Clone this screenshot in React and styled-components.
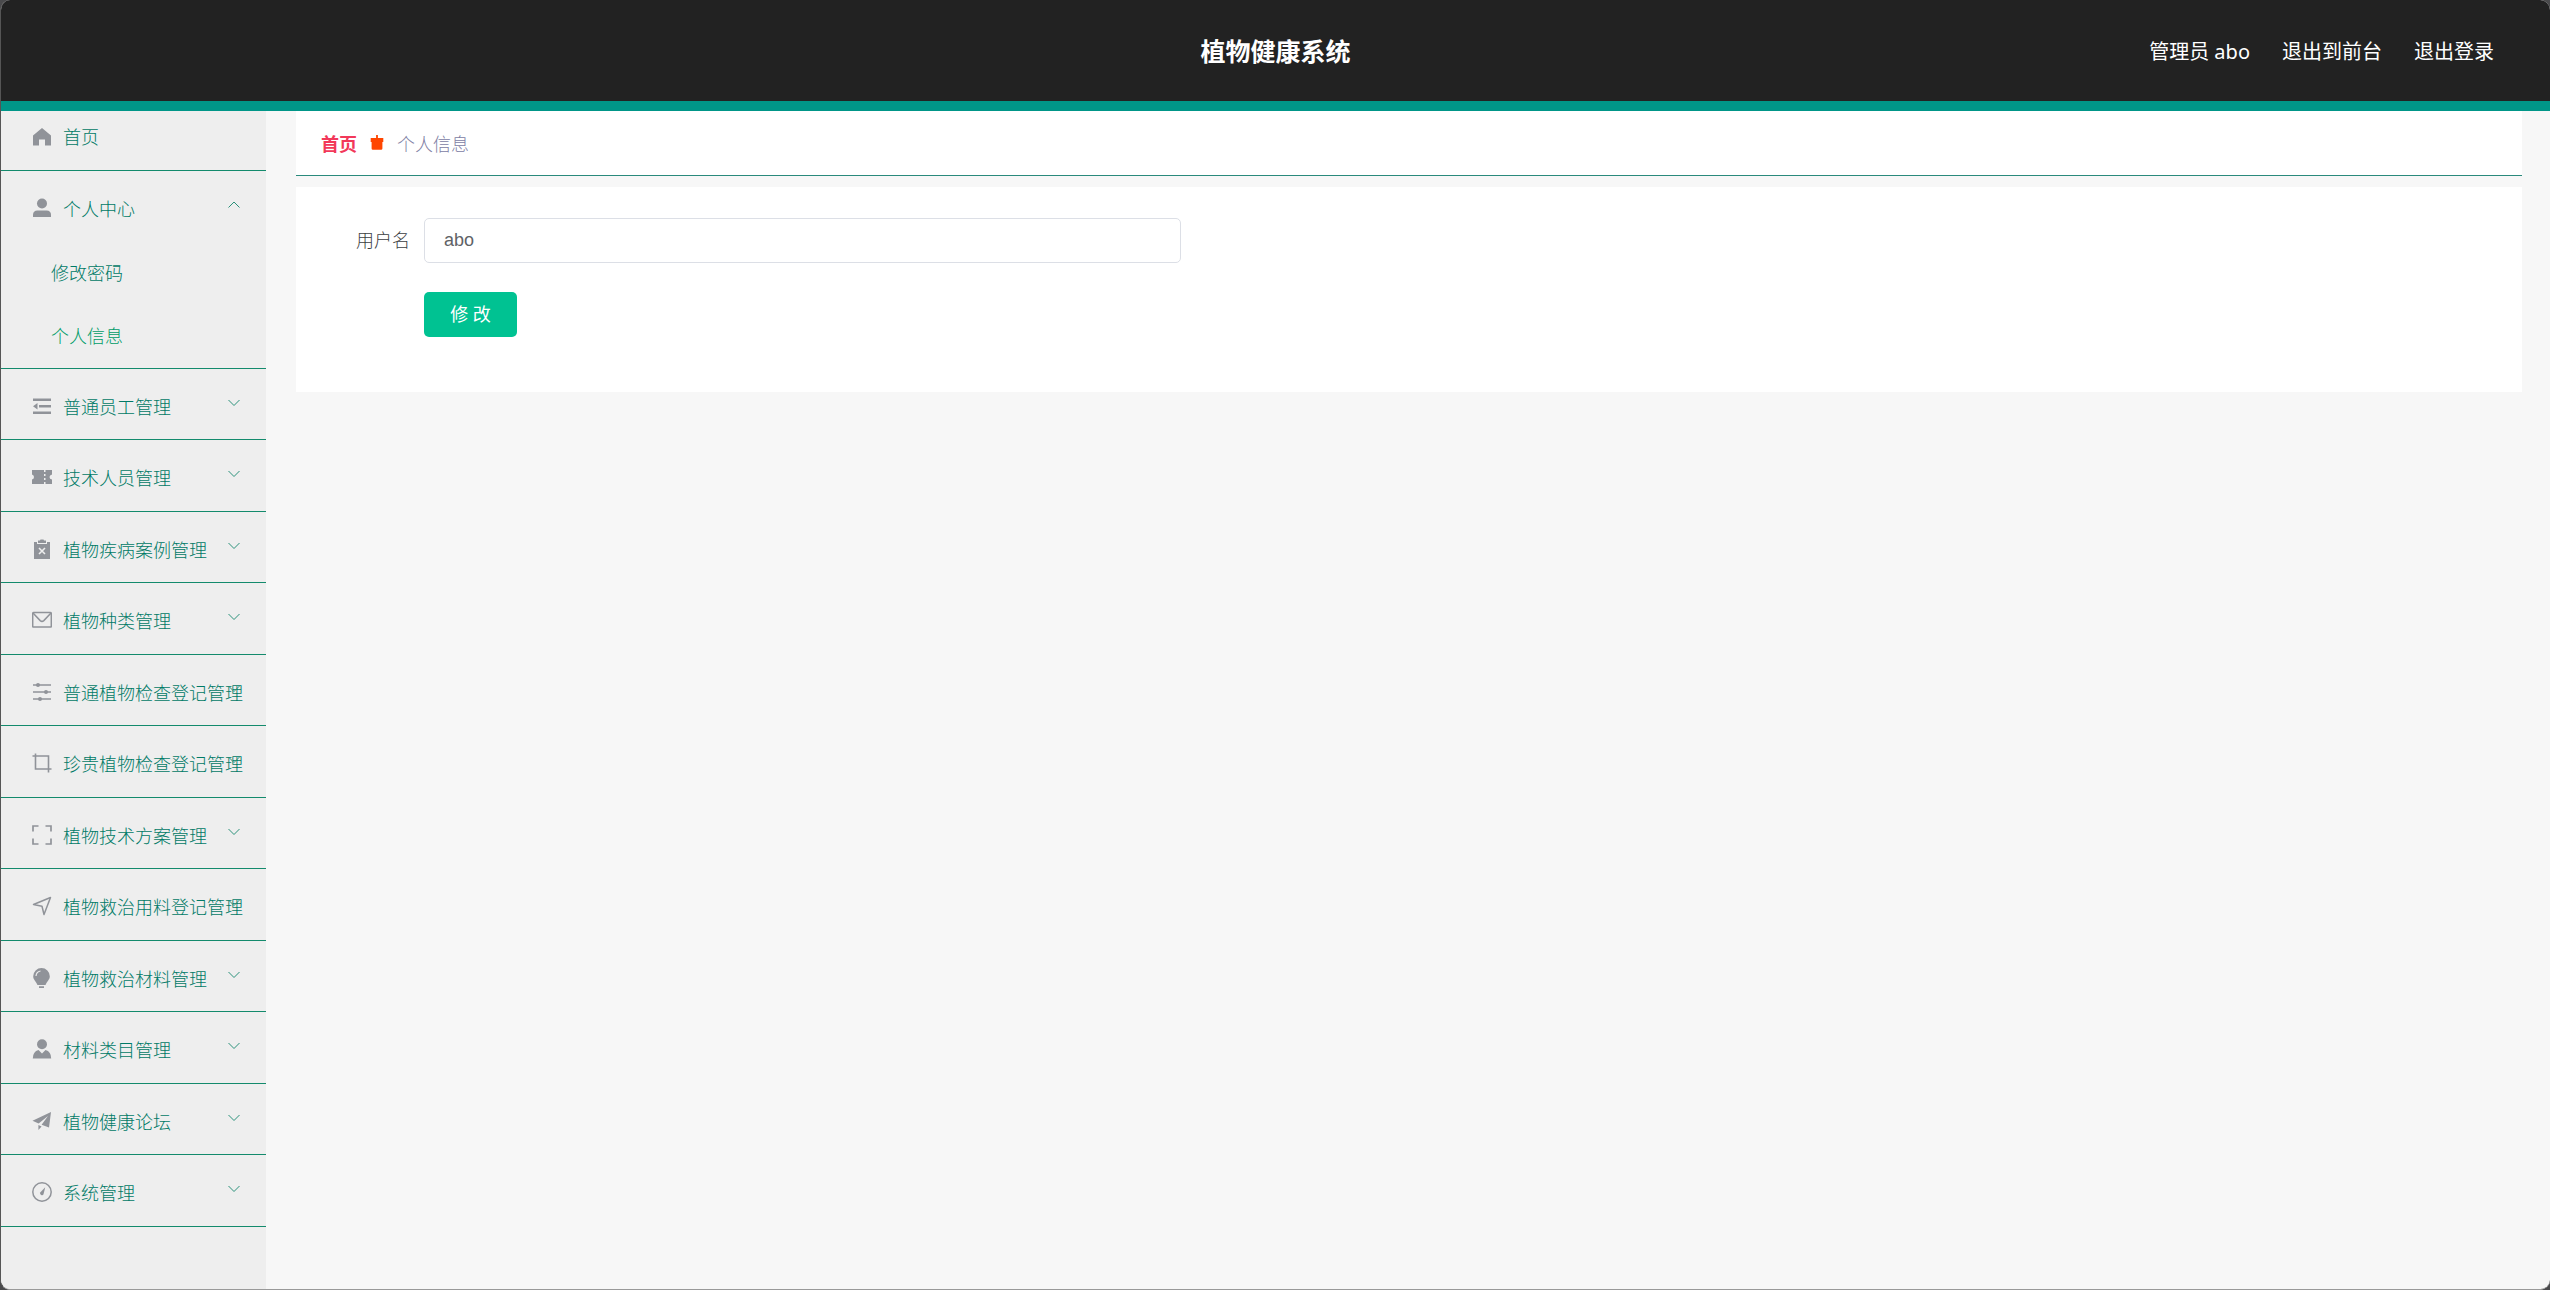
import React, { useState } from 'react';
import styled, { createGlobalStyle } from 'styled-components';

const GlobalStyle = createGlobalStyle`
  *{
    box-sizing: border-box;
  }
  body{
    margin: 0;
    background: #4a4a4c;
    font-family: 'Noto Sans', 'Noto Sans CJK SC', sans-serif;
    font-size: 18px;
  }
`

const icons = {
  home: <path d="M10 1 L19 8.5 V18.5 H13 V12.5 H7 V18.5 H1 V8.5 Z" />,
  user: (
    <>
      <circle cx="10" cy="5.5" r="5" />
      <path d="M1 19 V17 Q1 12.5 5.5 12.5 H14.5 Q19 12.5 19 17 V19 Z" />
    </>
  ),
  fold: <path d="M1 2.5 H19 V5 H1 Z M7 9 H19 V11.5 H7 Z M1 15.5 H19 V18 H1 Z M1 10.2 L5.5 7 V13.5 Z" />,
  ticket: (
    <path d="M0 3 H12 V5 H13.5 V3 H20 V7.5 Q17.5 8 17.5 10 Q17.5 12 20 12.5 V17 H13.5 V15 H12 V17 H0 V12.5 Q2 12 2 10 Q2 8 0 7.5 Z M12 7 V9 H13.5 V7 Z M12 11 V13 H13.5 V11 Z" fillRule="evenodd" />
  ),
  release: (
    <>
      <path d="M2 3 H5 V5 H15 V3 H18 V20 H2 Z" />
      <path d="M6 1.5 H8 L8.5 0.5 H11.5 L12 1.5 H14 V4 H6 Z" />
      <path d="M7 9 L13 15 M13 9 L7 15" stroke="#eee" strokeWidth="1.6" />
    </>
  ),
  message: (
    <g fill="none" stroke="currentColor" strokeWidth="1.5">
      <rect x="0.7" y="2.5" width="18.6" height="14.6" rx="1" />
      <path d="M1 3 L8.2 10.6 Q10 12.1 11.8 10.6 L19 3" />
    </g>
  ),
  operation: (
    <>
      <path d="M1 3 H19 M1 10 H19 M1 17 H19" stroke="currentColor" strokeWidth="1.5" />
      <circle cx="6" cy="3" r="2" />
      <circle cx="14" cy="10" r="2" />
      <circle cx="8" cy="17" r="2" />
    </>
  ),
  crop: <path d="M0.5 3 H16.5 V19.5 M3.5 0.5 V16 H19.5" fill="none" stroke="currentColor" strokeWidth="1.6" />,
  full: <path d="M1 6.5 V1 H6.5 M13.5 1 H19 V6.5 M19 13.5 V19 H13.5 M6.5 19 H1 V13.5" fill="none" stroke="currentColor" strokeWidth="1.7" />,
  position: <path d="M1.5 8.5 L18.5 1.5 L12 18.5 L10 10.2 Z" fill="none" stroke="currentColor" strokeWidth="1.5" strokeLinejoin="round" />,
  bulb: (
    <>
      <path d="M9.5 0 A8.3 8.3 0 0 1 17.8 8.3 C17.8 11.5 15.5 13 13.5 17 H5.5 C3.5 13 1.2 11.5 1.2 8.3 A8.3 8.3 0 0 1 9.5 0 Z M7 18.3 H12 V20 H7 Z" />
      <path d="M4 8 A5.5 5.5 0 0 1 8.5 3" fill="none" stroke="#eee" strokeWidth="1.2" />
    </>
  ),
  custom: (
    <>
      <circle cx="10" cy="5.2" r="5" />
      <path d="M0.8 19.5 Q0.8 12.5 6.5 11 L10 14.5 L13.5 11 Q19.2 12.5 19.2 19.5 Z" />
    </>
  ),
  promotion: <path d="M0.5 9.8 L19 1 L17 16.5 L9.6 13.8 L16 5 L6.6 12.6 Z M6.4 14 L9.6 15.4 L6.4 19 Z" />,
  odometer: (
    <>
      <circle cx="10" cy="10" r="9.2" fill="none" stroke="currentColor" strokeWidth="1.5" />
      <path d="M13.2 5.2 L11.6 12 A1.8 1.8 0 1 1 8.2 10.6 Z" />
    </>
  ),
  goods: <path d="M9 1 H11 V4.5 H17 V9 H16 V16 Q16 17.5 14.5 17.5 H5.5 Q4 17.5 4 16 V9 H3 V4.5 H9 Z" />,
}

const menus = [
  { title: '普通员工管理', icon: 'fold' },
  { title: '技术人员管理', icon: 'ticket' },
  { title: '植物疾病案例管理', icon: 'release' },
  { title: '植物种类管理', icon: 'message' },
  { title: '普通植物检查登记管理', icon: 'operation' },
  { title: '珍贵植物检查登记管理', icon: 'crop' },
  { title: '植物技术方案管理', icon: 'full' },
  { title: '植物救治用料登记管理', icon: 'position' },
  { title: '植物救治材料管理', icon: 'bulb' },
  { title: '材料类目管理', icon: 'custom' },
  { title: '植物健康论坛', icon: 'promotion' },
  { title: '系统管理', icon: 'odometer' },
]

const Icon = ({ name }) => (
  <MenuIcon viewBox="0 0 20 20" fill="currentColor" aria-hidden="true">{icons[name]}</MenuIcon>
)

const Arrow = ({ up }) => (
  <ArrowIcon viewBox="0 0 12 8" aria-hidden="true">
    <path d={up ? 'M0.5 6.5 L6 1 L11.5 6.5' : 'M0.5 1 L6 6.5 L11.5 1'} />
  </ArrowIcon>
)

const App = () => {

const [username, setUsername] = useState('abo');

  return (
    <Page>
      <GlobalStyle />
      <Header>
        <Title>植物健康系统</Title>
        <HeaderLinks>
          <span>管理员 abo</span>
          <a href="#front">退出到前台</a>
          <a href="#logout">退出登录</a>
        </HeaderLinks>
      </Header>
      <Body>
        <Sidebar>
          <HomeLink href="#home"><Icon name="home" />首页</HomeLink>
          <OpenMenu>
            <MenuButton type="button" aria-expanded="true"><Icon name="user" />个人中心<Arrow up /></MenuButton>
            <SubLink href="#password">修改密码</SubLink>
            <SubLink href="#info" $active>个人信息</SubLink>
          </OpenMenu>
          <MenuList>
            {menus.map((menu) => (
              <MenuItem key={menu.title}>
                <MenuButton type="button" aria-expanded="false">
                  <Icon name={menu.icon} />{menu.title}<Arrow />
                </MenuButton>
              </MenuItem>
            ))}
          </MenuList>
        </Sidebar>
        <Main>
          <Breadcrumb>
            <a href="#home">首页</a>
            <svg viewBox="0 0 20 20" fill="#ff4500" aria-hidden="true">{icons.goods}</svg>
            <span>个人信息</span>
          </Breadcrumb>
          <Form onSubmit={(e) => e.preventDefault()}>
            <FormRow>
              <label htmlFor="username">用户名</label>
              <input id="username" value={username} onChange={(e) => setUsername(e.target.value)} />
            </FormRow>
            <FormActions>
              <button type="submit">修 改</button>
            </FormActions>
          </Form>
        </Main>
      </Body>
    </Page>
  )
}

const Page = styled.div`
  display: flex;
  flex-direction: column;
  min-height: 100vh;
  overflow: hidden;
  border-left: 1px solid #555;
  border-bottom: 1px solid #999;
  border-radius: 10px;
  background: #f7f7f7;
`

const Header = styled.header`
  display: grid;
  grid-template-columns: 1fr auto 1fr;
  align-items: center;
  height: 111px;
  padding: 0 56px 1px;
  border-bottom: 10px solid #009688;
  background: #222;
  color: #fff;
`

const Title = styled.h1`
  grid-column: 2;
  margin: 0;
  font-size: 25px;
  font-weight: 700;
`

const HeaderLinks = styled.div`
  display: flex;
  justify-content: flex-end;
  gap: 32px;
  font-size: 20px;
  a{
    color: inherit;
    text-decoration: none;
  }
`

const Body = styled.div`
  display: flex;
  flex: 1;
`

const Sidebar = styled.nav`
  flex: 0 0 265px;
  background: #eee;
  color: #007a66;
  font-weight: 300;
  line-height: 24px;
`

const MenuIcon = styled.svg`
  width: 20px;
  height: 20px;
  flex-shrink: 0;
  color: #909399;
`

const ArrowIcon = styled.svg`
  position: absolute;
  top: 30px;
  right: 26px;
  width: 12px;
  height: 8px;
  fill: none;
  stroke: #2a917a;
`

const HomeLink = styled.a`
  display: flex;
  align-items: center;
  gap: 11px;
  height: 60px;
  padding: 0 31px 8px;
  border-bottom: 1px solid #138a6c;
  color: inherit;
  text-decoration: none;
`

const MenuButton = styled.button`
  position: relative;
  display: flex;
  align-items: center;
  gap: 11px;
  width: 100%;
  height: 70px;
  padding: 5px 0 0 31px;
  border: none;
  background: none;
  color: inherit;
  font: inherit;
  white-space: nowrap;
  cursor: pointer;
  svg:first-child{
    margin-bottom: 2px;
  }
`

const OpenMenu = styled.div`
  border-bottom: 1px solid #138a6c;
`

const SubLink = styled.a`
  display: flex;
  align-items: center;
  height: ${(props) => (props.$active ? '63px' : '64px')};
  padding-bottom: ${(props) => (props.$active ? '2px' : '0')};
  padding-left: 50px;
  color: ${(props) => (props.$active ? '#009c68' : 'inherit')};
  text-decoration: none;
`

const MenuList = styled.ul`
  margin: 0;
  padding: 0;
  list-style: none;
`

const MenuItem = styled.li`
  height: 71px;
  border-bottom: 1px solid #138a6c;
  &:nth-child(even){
    height: 72px;
  }
`

const Main = styled.main`
  flex: 1;
  padding: 0 28px 0 30px;
`

const Breadcrumb = styled.div`
  display: flex;
  align-items: center;
  height: 65px;
  margin-bottom: 11px;
  padding-left: 25px;
  border-bottom: 1px solid #2a8a7c;
  background: #fff;
  a{
    color: #f2385a;
    font-weight: 700;
    text-decoration: none;
  }
  svg{
    width: 18px;
    height: 18px;
    margin: 0 11px;
  }
  span{
    color: #8080a4;
    font-weight: 300;
  }
`

const Form = styled.form`
  padding: 31px 0 55px;
  background: #fff;
`

const FormRow = styled.div`
  display: flex;
  align-items: center;
  margin-bottom: 29px;
  label{
    width: 128px;
    padding: 0 14px 3px 0;
    color: #3c3e42;
    font-weight: 300;
    text-align: right;
  }
  input{
    width: 34%;
    height: 45px;
    padding: 0 19px;
    border: 1px solid #dcdfe6;
    border-radius: 5px;
    background: #fff;
    color: #606266;
    font-family: 'Liberation Sans', 'Noto Sans CJK SC', sans-serif;
    font-size: 18px;
  }
`

const FormActions = styled.div`
  padding-left: 128px;
  button{
    display: block;
    width: 93px;
    height: 45px;
    padding: 0 0 3px;
    border: none;
    border-radius: 5px;
    background: #00c292;
    color: #fff;
    font: inherit;
    cursor: pointer;
  }
`

export default App
